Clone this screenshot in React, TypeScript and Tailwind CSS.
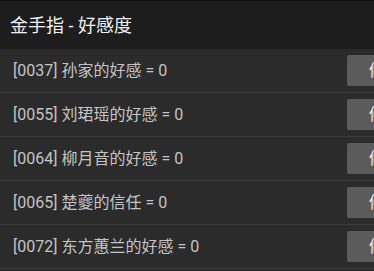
const rows = [
  '[0037] 孙家的好感 = 0',
  '[0055] 刘珺瑶的好感 = 0',
  '[0064] 柳月音的好感 = 0',
  '[0065] 楚夔的信任 = 0',
  '[0072] 东方蕙兰的好感 = 0',
];

export default function App() {
  return (
    <div
      className="w-[374px] h-[271px] overflow-hidden bg-[#2b2b2b]"
      style={{ fontFamily: 'Roboto, "Noto Sans CJK SC", sans-serif' }}
    >
      {/* Header */}
      <div className="h-[49px] bg-[#1d1d1d] border-t border-[#111] flex items-center px-[10px]">
        <span className="text-[18px] text-[#f2f2f2]">金手指 - 好感度</span>
      </div>

      {/* List */}
      <div className="flex flex-col">
        {rows.map((r) => (
          <div
            key={r}
            className="h-[44px] flex items-center border-b border-[#3a3a3a] pl-[13px]"
          >
            <span className="flex-1 text-[16px] text-[#c4c4c4] whitespace-nowrap">{r}</span>
            <div className="w-[60px] h-[31px] bg-[#5b5b5b] rounded-[2px] shrink-0 flex items-center pl-[22px] ml-[2px] -mr-[33px] text-[16px] text-[#eeeeee] whitespace-nowrap">
              修改
            </div>
          </div>
        ))}
      </div>
    </div>
  );
}
